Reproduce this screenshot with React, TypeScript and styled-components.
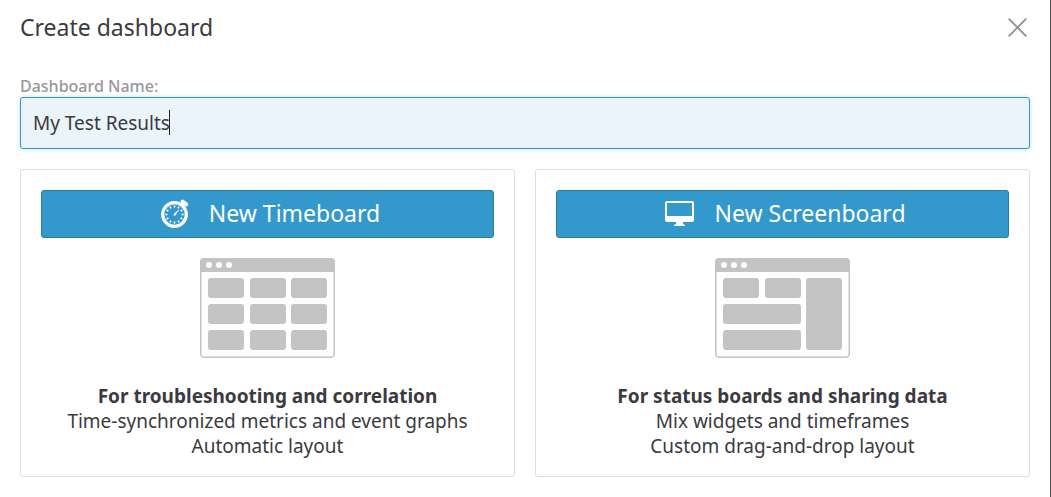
import React, { useLayoutEffect, useRef, useState } from "react";
import styled, { createGlobalStyle } from "styled-components";

const GlobalStyle = createGlobalStyle`
  * { box-sizing: border-box; }
  body {
    margin: 0;
    background: #fff;
    color: #3b3a40;
    font-family: "Noto Sans", sans-serif;
  }
`;

const Dialog = styled.main`
  min-height: 100vh;
  padding: 8px 20px 20px;
  border-right: 1px solid #4a4a4a;
`;

const Header = styled.header`
  display: flex;
  align-items: center;
  justify-content: space-between;
  height: 38px;
  margin-bottom: 29px;
`;

const Title = styled.h1`
  margin: 0;
  font-size: 23px;
  line-height: 32px;
  font-weight: 400;
`;

const CloseButton = styled.button`
  display: flex;
  padding: 3px;
  border: 0;
  background: none;
  color: #8e8e93;
  cursor: pointer;
`;

const Label = styled.label`
  display: block;
  color: #98989b;
  font-size: 16px;
  font-weight: 500;
  line-height: 22px;
`;

const Field = styled.div`
  position: relative;
`;

const NameInput = styled.input`
  display: block;
  width: 100%;
  height: 52px;
  padding: 0 12px;
  border: 1px solid #3399cc;
  border-radius: 3px;
  outline: 0;
  background: #ecf4fb;
  box-shadow: 0 0 4px rgba(51, 153, 204, 0.3);
  color: inherit;
  caret-color: transparent;
  font-family: inherit;
  font-size: 19px;
`;

const Caret = styled.span`
  position: absolute;
  top: 13px;
  width: 1px;
  height: 25px;
  background: #222;
  pointer-events: none;
`;

const Options = styled.div`
  display: grid;
  grid-template-columns: 1fr 1fr;
  gap: 20px;
  margin-top: 20px;
`;

const Card = styled.section`
  display: flex;
  flex-direction: column;
  align-items: center;
  padding: 20px 20px 17px;
  border: 1px solid #dddddf;
  border-radius: 3px;
  text-align: center;
`;

const CreateButton = styled.button`
  display: flex;
  align-items: center;
  justify-content: center;
  gap: 20px;
  width: 100%;
  height: 48px;
  margin-bottom: 20px;
  padding: 0 0 3px 6px;
  border: 1px solid #297ba3;
  border-radius: 3px;
  background: #3399cc;
  color: #fff;
  font-family: inherit;
  font-size: 23px;
  line-height: 32px;
  cursor: pointer;
`;

const Description = styled.p`
  margin: 26px 0 0;
  font-size: 19px;
  line-height: 25px;
`;

const Line = styled.span`
  display: block;
`;

const Lead = styled.strong`
  display: block;
  font-weight: 700;
`;

const ticks = Array.from({ length: 12 }, (_, i) => i * 30);

const StopwatchIcon = () => (
  <svg width="28" height="30" viewBox="0 0 28 30" aria-hidden="true">
    <circle cx="13.5" cy="16.5" r="11.8" fill="none" stroke="#fff" strokeWidth="3.2" />
    {ticks.map((a) => (
      <rect key={a} x="12.7" y="7.4" width="1.6" height="2" fill="#fff" transform={`rotate(${a} 13.5 16.5)`} />
    ))}
    <path d="M18.8 10.8L14.4 17.4L12.6 17.6L12.9 15.8Z" fill="#fff" />
    <path d="M20.5 7.5L22.5 5" stroke="#fff" strokeWidth="3" />
    <path d="M21.5 3.6L25.2 6.4" stroke="#fff" strokeWidth="4" strokeLinecap="round" />
  </svg>
);

const MonitorIcon = () => (
  <svg width="29" height="26" viewBox="0 0 29 26" aria-hidden="true">
    <path
      fill="#fff"
      fillRule="evenodd"
      d="M2 1H27Q29 1 29 3V20Q29 22 27 22H18V24L20 25V26H9V25L11 24V22H2Q0 22 0 20V3Q0 1 2 1ZM2 3V16H27V3Z"
    />
  </svg>
);

type Tile = [x: number, y: number, width: number, height: number];

const timeboardTiles: Tile[] = [20, 46, 72].flatMap((y) =>
  [8, 50, 91].map((x): Tile => [x, y, 36, 20])
);

const screenboardTiles: Tile[] = [
  [8, 20, 36, 20],
  [50, 20, 36, 20],
  [91, 20, 36, 72],
  [8, 46, 78, 20],
  [8, 72, 78, 20],
];

const BoardPreview = ({ tiles }: { tiles: Tile[] }) => (
  <svg width="135" height="100" viewBox="0 0 135 100" aria-hidden="true">
    <rect x="0.75" y="0.75" width="133.5" height="98.5" rx="3.5" fill="#fff" stroke="#c4c4c4" strokeWidth="1.5" />
    <path d="M0 14V4Q0 0 4 0H131Q135 0 135 4V14Z" fill="#c4c4c4" />
    {[9, 19, 29].map((x) => (
      <circle key={x} cx={x} cy="7" r="3" fill="#fff" />
    ))}
    {tiles.map(([x, y, width, height]) => (
      <rect key={`${x}-${y}`} x={x} y={y} width={width} height={height} rx="3" fill="#c4c4c4" />
    ))}
  </svg>
);

function DashboardNameField() {
  const [name, setName] = useState("My Test Results");
  const [caretLeft, setCaretLeft] = useState(0);
  const inputRef = useRef<HTMLInputElement>(null);

  useLayoutEffect(() => {
    const input = inputRef.current;
    const context = document.createElement("canvas").getContext("2d");
    if (!input || !context) return;
    const style = getComputedStyle(input);
    context.font = `${style.fontSize} ${style.fontFamily}`;
    const textWidth = context.measureText(name).width;
    setCaretLeft(Math.round(parseInt(style.paddingLeft, 10) + textWidth));
  }, [name]);

  return (
    <>
      <Label htmlFor="dashboard-name">Dashboard Name:</Label>
      <Field>
        <NameInput
          id="dashboard-name"
          ref={inputRef}
          type="text"
          autoComplete="off"
          value={name}
          onChange={(event) => setName(event.target.value)}
        />
        <Caret style={{ left: caretLeft }} />
      </Field>
    </>
  );
}

export default function App() {
  return (
    <>
      <GlobalStyle />
      <Dialog>
        <Header>
          <Title>Create dashboard</Title>
          <CloseButton type="button" aria-label="Close">
            <svg width="19" height="19" viewBox="0 0 19 19" aria-hidden="true">
              <path d="M0.7 0.7L18.3 18.3M18.3 0.7L0.7 18.3" stroke="currentColor" strokeWidth="1.7" />
            </svg>
          </CloseButton>
        </Header>
        <DashboardNameField />
        <Options>
          <Card>
            <CreateButton type="button">
              <StopwatchIcon />
              New Timeboard
            </CreateButton>
            <BoardPreview tiles={timeboardTiles} />
            <Description>
              <Lead>For troubleshooting and correlation</Lead>
              <Line>Time-synchronized metrics and event graphs</Line>
              <Line>Automatic layout</Line>
            </Description>
          </Card>
          <Card>
            <CreateButton type="button">
              <MonitorIcon />
              New Screenboard
            </CreateButton>
            <BoardPreview tiles={screenboardTiles} />
            <Description>
              <Lead>For status boards and sharing data</Lead>
              <Line>Mix widgets and timeframes</Line>
              <Line>Custom drag-and-drop layout</Line>
            </Description>
          </Card>
        </Options>
      </Dialog>
    </>
  );
}
